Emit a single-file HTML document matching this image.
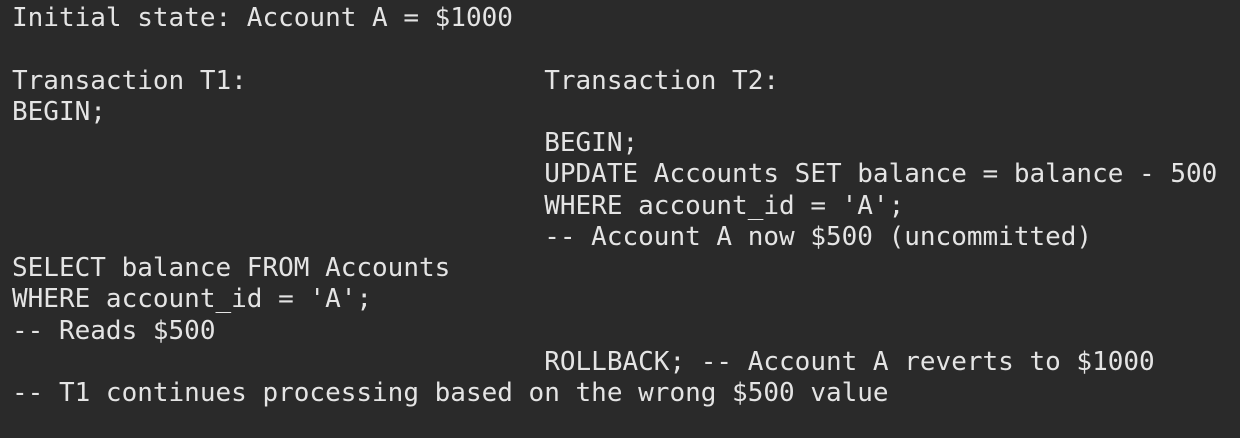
<!DOCTYPE html>
<html><head><meta charset="utf-8"><style>
html,body{margin:0;padding:0;background:#2a2a2a;width:1240px;height:438px;overflow:hidden}
pre{margin:0;padding:3px 0 0 12px;font-family:"DejaVu Sans Mono","Liberation Mono",monospace;font-size:26px;line-height:31.25px;color:#e4e4e4}
</style></head><body><pre>Initial state: Account A = $1000

Transaction T1:                   Transaction T2:
BEGIN;
                                  BEGIN;
                                  UPDATE Accounts SET balance = balance - 500
                                  WHERE account_id = 'A';
                                  -- Account A now $500 (uncommitted)
SELECT balance FROM Accounts
WHERE account_id = 'A';
-- Reads $500
                                  ROLLBACK; -- Account A reverts to $1000
-- T1 continues processing based on the wrong $500 value</pre></body></html>
